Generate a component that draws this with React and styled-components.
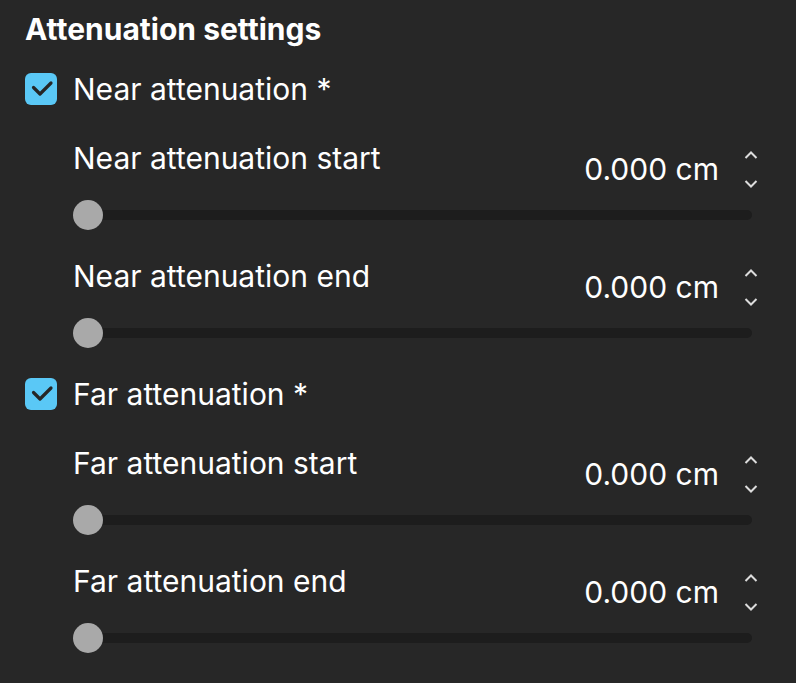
import React from "react";
import styled, { createGlobalStyle } from "styled-components";

const GlobalStyle = createGlobalStyle`
  html, body {
    margin: 0;
    padding: 0;
    background: #272727;
  }
  body {
    font-family: Inter, "Noto Sans", "Liberation Sans", sans-serif;
    color: #ffffff;
  }
`;

const Panel = styled.div`
  width: 796px;
  height: 683px;
  box-sizing: border-box;
  padding: 9px 38px 0 25px;
  background: #272727;
  overflow: hidden;
`;

const Title = styled.h2`
  margin: 0;
  font-size: 30px;
  font-weight: 700;
  line-height: 40px;
`;

const Section = styled.div`
  display: flex;
  flex-direction: column;
`;

const CheckRow = styled.label`
  display: flex;
  align-items: center;
  gap: 16px;
  height: 40px;
  margin-top: ${(p) => p.$top}px;
  font-size: 30px;
`;

const Box = styled.span`
  width: 32px;
  height: 32px;
  border-radius: 6px;
  background: #5ac8f6;
  display: flex;
  align-items: center;
  justify-content: center;
`;

const Field = styled.div`
  padding-left: 48px;
  margin-top: ${(p) => p.$top}px;
`;

const FieldHead = styled.div`
  display: flex;
  justify-content: space-between;
  align-items: flex-start;
`;

const FieldLabel = styled.span`
  font-size: 30px;
  line-height: 40px;
`;

const ValueBox = styled.div`
  display: flex;
  align-items: center;
  gap: 25px;
  margin-top: 11px;
`;

const Value = styled.span`
  font-size: 30px;
  line-height: 40px;
`;

const Spinner = styled.div`
  display: flex;
  flex-direction: column;
  gap: 21px;
`;

const Track = styled.div`
  position: relative;
  height: 10px;
  margin: 21px 6px 0 2px;
  border-radius: 5px;
  background: #1d1d1d;
`;

const Thumb = styled.span`
  position: absolute;
  left: -2px;
  top: -10px;
  width: 30px;
  height: 30px;
  border-radius: 50%;
  background: #a9a9a9;
`;

const Check = () => (
  <svg width="32" height="32" viewBox="0 0 32 32">
    <path
      d="M8.5 14.5l6.5 6.5L26 10"
      fill="none"
      stroke="#262626"
      strokeWidth="3.2"
      strokeLinecap="round"
      strokeLinejoin="round"
    />
  </svg>
);

const Chevron = ({ up }) => (
  <svg width="14" height="8" viewBox="0 0 14 8">
    <path
      d={up ? "M1.5 7l5.5-5.5L12.5 7" : "M1.5 1l5.5 5.5L12.5 1"}
      fill="none"
      stroke="#dcdcdc"
      strokeWidth="2"
    />
  </svg>
);

const SliderField = ({ label, top }) => (
  <Field $top={top}>
    <FieldHead>
      <FieldLabel>{label}</FieldLabel>
      <ValueBox>
        <Value>0.000 cm</Value>
        <Spinner>
          <Chevron up />
          <Chevron />
        </Spinner>
      </ValueBox>
    </FieldHead>
    <Track>
      <Thumb />
    </Track>
  </Field>
);

const groups = [
  { title: "Near attenuation *", top: 20, items: ["Near attenuation start", "Near attenuation end"] },
  { title: "Far attenuation *", top: 36, items: ["Far attenuation start", "Far attenuation end"] },
];

export default function App() {
  return (
    <>
      <GlobalStyle />
      <Panel>
        <Title>Attenuation settings</Title>
        {groups.map((g) => (
          <Section key={g.title}>
            <CheckRow $top={g.top}>
              <Box>
                <Check />
              </Box>
              {g.title}
            </CheckRow>
            {g.items.map((item, i) => (
              <SliderField key={item} label={item} top={i === 0 ? 29 : 36} />
            ))}
          </Section>
        ))}
      </Panel>
    </>
  );
}
